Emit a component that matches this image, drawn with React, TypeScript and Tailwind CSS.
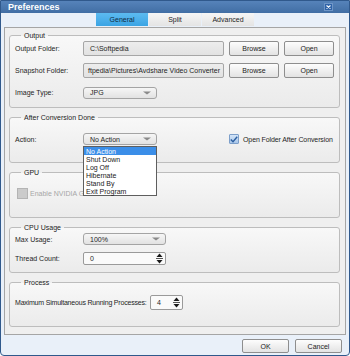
const actions = ['No Action', 'Shut Down', 'Log Off', 'Hibernate', 'Stand By', 'Exit Program'];

function Button({ label, w }: { label: string; w: string }) {
  return (
    <div
      className={`${w} h-full flex items-center justify-center border border-[#8e8e8e] rounded-[2px] bg-gradient-to-b from-[#fdfdfd] to-[#e3e3e3] text-[#222]`}
    >
      {label}
    </div>
  );
}

function ComboArrow() {
  return (
    <svg width="8" height="4" viewBox="0 0 8 4" className="shrink-0">
      <path d="M0 0.5 H8 L4 3.5 Z" fill="#8a8a8a" />
    </svg>
  );
}

function SpinArrows() {
  return (
    <svg width="7" height="11" viewBox="0 0 7 11" className="shrink-0">
      <path d="M0.5 4 L3.5 0.5 L6.5 4 Z" fill="#1a1a1a" />
      <rect x="0" y="5" width="7" height="1" fill="#555" />
      <path d="M0.5 7 L3.5 10.5 L6.5 7 Z" fill="#1a1a1a" />
    </svg>
  );
}

function Combo({ value, w }: { value: string; w: string }) {
  return (
    <div
      className={`${w} h-[12px] flex items-center justify-between pl-[6px] pr-[5px] border border-[#a4a4a4] rounded-[3px] bg-gradient-to-b from-[#f6f6f6] to-[#e2e2e2]`}
    >
      <span>{value}</span>
      <ComboArrow />
    </div>
  );
}

function Spin({ value, w, h }: { value: string; w: string; h: string }) {
  return (
    <div
      className={`${w} ${h} shrink-0 flex items-center justify-between pl-[6px] pr-[2px] border border-[#9a9a9a] rounded-[2px] bg-[#fafafa]`}
    >
      <span>{value}</span>
      <SpinArrows />
    </div>
  );
}

function Group({ title, className, children }: { title: string; className: string; children: React.ReactNode }) {
  return (
    <fieldset className="border border-[#bdbdbd] rounded-[3px] bg-gradient-to-b from-[#f8f8f8] to-[#ebebeb]">
      <legend className="ml-[11px] px-[3px] h-[9px] leading-[9px] text-[#222]">{title}</legend>
      <div className={`px-[5px] ${className}`}>{children}</div>
    </fieldset>
  );
}

export default function App() {
  return (
    <div className="w-[350px] h-[356px] overflow-hidden bg-white">
      <div className="w-[350px] h-[356px] flex flex-col border border-[#30598c] rounded-b-[4px] bg-[#e9f0f9] font-['Liberation_Sans',Arial,sans-serif] text-[7px] leading-none text-[#1e1e1e] whitespace-nowrap">
        {/* Title bar */}
        <div className="h-[12px] shrink-0 flex items-center justify-between pl-[7px] pr-[16px] bg-gradient-to-b from-[#5683ba] to-[#416ea4]">
          <span className="text-[9px] font-bold text-white">Preferences</span>
          <div className="w-[9px] h-[8px] flex items-center justify-center bg-[#2f63a8] border border-[#6f96c7]">
            <svg width="5" height="4" viewBox="0 0 5 4">
              <path d="M0.5 0.5 L4.5 3.5 M4.5 0.5 L0.5 3.5" stroke="#fff" strokeWidth="1.2" />
            </svg>
          </div>
        </div>

        {/* Tabs */}
        <div className="h-[14px] shrink-0 flex justify-center gap-[1px]">
          <div className="w-[52px] h-[13px] flex items-center justify-center bg-gradient-to-b from-[#5cbaf0] to-[#3aa4e4] text-[#102a40]">
            General
          </div>
          <div className="w-[52px] h-[13px] flex items-center justify-center bg-gradient-to-b from-[#f6f6f6] to-[#e4e4e4]">
            Split
          </div>
          <div className="w-[52px] h-[13px] flex items-center justify-center bg-gradient-to-b from-[#f6f6f6] to-[#e4e4e4]">
            Advanced
          </div>
        </div>

        {/* Panel */}
        <div className="h-[308px] shrink-0 mx-[3px] border border-[#a5a5a5] bg-[#efefef] pl-[4px] pr-[5px] pt-[3px] flex flex-col gap-[5px]">
          <Group title="Output" className="pt-[1px] pb-[7px] flex flex-col gap-[7px]">
            <div className="h-[15px] flex items-center gap-[5px]">
              <span className="w-[63px] shrink-0">Output Folder:</span>
              <div className="flex-1 h-full flex items-center pl-[6px] border border-[#a6a6a6] rounded-[2px] bg-gradient-to-b from-[#ededed] to-[#e2e2e2]">
                C:\Softpedia
              </div>
              <Button label="Browse" w="w-[50px]" />
              <Button label="Open" w="w-[50px]" />
            </div>
            <div className="h-[15px] flex items-center gap-[5px]">
              <span className="w-[63px] shrink-0">Snapshot Folder:</span>
              <div className="flex-1 min-w-0 h-full flex items-center pl-[4px] border border-[#a6a6a6] rounded-[2px] bg-gradient-to-b from-[#ededed] to-[#e2e2e2] overflow-hidden">
                ftpedia\Pictures\Avdshare Video Converter
              </div>
              <Button label="Browse" w="w-[50px]" />
              <Button label="Open" w="w-[50px]" />
            </div>
            <div className="h-[15px] flex items-center">
              <span className="w-[68px] shrink-0">Image Type:</span>
              <Combo value="JPG" w="w-[74px]" />
            </div>
          </Group>

          <Group title="After Conversion Done" className="pt-[11px] pb-[17px]">
            <div className="h-[12px] flex items-center">
              <span className="w-[68px] shrink-0">Action:</span>
              <div className="relative">
                <Combo value="No Action" w="w-[74px]" />
                <div className="absolute left-0 top-[13px] w-[74px] z-10 border border-[#5e5e5e] bg-white">
                  {actions.map((a, i) => (
                    <div
                      key={a}
                      className={`h-[8px] flex items-center pl-[2px] ${i === 0 ? 'bg-[#3b8ee8] text-white' : 'text-[#1a1a1a]'}`}
                    >
                      {a}
                    </div>
                  ))}
                </div>
              </div>
              <div className="ml-[72px] w-[10px] h-[10px] shrink-0 flex items-center justify-center border border-[#7d9fca] rounded-[1px] bg-gradient-to-b from-[#d3e4f7] to-[#a9c7ea]">
                <svg width="8" height="7" viewBox="0 0 8 7">
                  <path d="M0.8 3.6 L3 5.8 L7.2 0.8" fill="none" stroke="#2c5e9f" strokeWidth="1.4" />
                </svg>
              </div>
              <span className="ml-[4px] tracking-[-0.1px]">Open Folder After Conversion</span>
            </div>
          </Group>

          <Group title="GPU" className="pt-[11px] pb-[18px]">
            <div className="h-[11px] flex items-center pl-[2px]">
              <div className="w-[11px] h-[11px] border border-[#b4b4b4] bg-[#cbcbcb]" />
              <span className="ml-[2px] text-[#a6a6a6]">Enable NVIDIA GPU Acceleration</span>
            </div>
          </Group>

          <Group title="CPU Usage" className="pt-[1px] pb-[7px] flex flex-col gap-[7px]">
            <div className="h-[12px] flex items-center">
              <span className="w-[68px] shrink-0">Max Usage:</span>
              <Combo value="100%" w="w-[83px]" />
            </div>
            <div className="h-[13px] flex items-center">
              <span className="w-[68px] shrink-0">Thread Count:</span>
              <Spin value="0" w="w-[83px]" h="h-[13px]" />
            </div>
          </Group>

          <Group title="Process" className="pt-[8px] pb-[16px]">
            <div className="h-[15px] flex items-center">
              <span className="w-[135px] shrink-0 tracking-[-0.2px]">Maximum Simultaneous Running Processes:</span>
              <Spin value="4" w="w-[33px]" h="h-[15px]" />
            </div>
          </Group>
        </div>

        {/* Dialog buttons */}
        <div className="h-[14px] mt-[4px] flex justify-end gap-[6px] pr-[7px]">
          <Button label="OK" w="w-[47px]" />
          <Button label="Cancel" w="w-[47px]" />
        </div>
      </div>
    </div>
  );
}
